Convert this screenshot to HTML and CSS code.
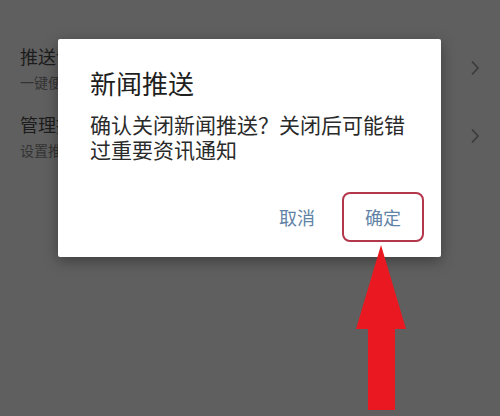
FILE: index.html
```html
<!DOCTYPE html>
<html lang="zh-CN">
<head>
<meta charset="utf-8">
<title>新闻推送</title>
<link rel="stylesheet" href="styles.css">
</head>
<body>
<div class="page">
  <div class="list">
    <div class="row">
      <div class="texts">
        <div class="main">推送设置</div>
        <div class="sub">一键便捷管理推送消息</div>
      </div>
      <svg class="chev" width="10" height="16" viewBox="0 0 10 16"><path d="M2 1.5 L8 8 L2 14.5" fill="none" stroke="#3a3a3a" stroke-width="1.6"/></svg>
    </div>
    <div class="row">
      <div class="texts">
        <div class="main">管理推送</div>
        <div class="sub">设置推送内容与时间</div>
      </div>
      <svg class="chev" width="10" height="16" viewBox="0 0 10 16"><path d="M2 1.5 L8 8 L2 14.5" fill="none" stroke="#3a3a3a" stroke-width="1.6"/></svg>
    </div>
  </div>

  <div class="dialog">
    <div class="title">新闻推送</div>
    <div class="msg">确认关闭新闻推送？关闭后可能错过重要资讯通知</div>
    <div class="actions">
      <div class="btn">取消</div>
      <div class="btn btn-ok">确定</div>
    </div>
  </div>

  <svg class="arrow" width="60" height="170" viewBox="0 0 60 170">
    <polygon points="25,0 50,84 39,84 39,165 12,165 12,84 0,84" fill="#ea1820"/>
  </svg>
</div>
</body>
</html>
```

FILE: styles.css
```css
html, body {
  margin: 0;
  padding: 0;
}
body {
  width: 500px;
  height: 416px;
  overflow: hidden;
  background: #5f5f5f;
  font-family: "Noto Sans CJK SC", "Noto Sans", sans-serif;
}
.page {
  position: relative;
  width: 500px;
  height: 416px;
}
.list {
  display: flex;
  flex-direction: column;
  padding-top: 34px;
}
.row {
  display: flex;
  align-items: center;
  justify-content: space-between;
  padding: 0 20px 0 20px;
  height: 68px;
}
.texts {
  display: flex;
  flex-direction: column;
  width: 38px;
  overflow: hidden;
  white-space: nowrap;
}
.main {
  font-size: 18px;
  line-height: 24px;
  color: #1c1c1c;
}
.sub {
  font-size: 14px;
  line-height: 20px;
  color: #333;
  margin-top: 4px;
}
.dialog {
  position: absolute;
  left: 58px;
  top: 39px;
  width: 383px;
  height: 218px;
  box-sizing: border-box;
  background: #fff;
  border-radius: 2px;
  box-shadow: 0 4px 14px rgba(0, 0, 0, 0.35);
  display: flex;
  flex-direction: column;
  padding: 29px 17px 15px 32px;
}
.title {
  font-size: 26px;
  line-height: 30px;
  color: #1e1e1e;
}
.msg {
  margin-top: 14px;
  width: 320px;
  font-size: 21px;
  line-height: 25px;
  color: #2a2a2a;
}
.actions {
  margin-top: auto;
  display: flex;
  justify-content: flex-end;
  gap: 4px;
}
.btn {
  width: 82px;
  height: 50px;
  box-sizing: border-box;
  display: flex;
  align-items: center;
  justify-content: center;
  font-size: 18px;
  color: #6283a6;
}
.btn-ok {
  border: 2.5px solid #b3374a;
  border-radius: 8px;
}
.arrow {
  position: absolute;
  left: 356px;
  top: 245px;
}
```
